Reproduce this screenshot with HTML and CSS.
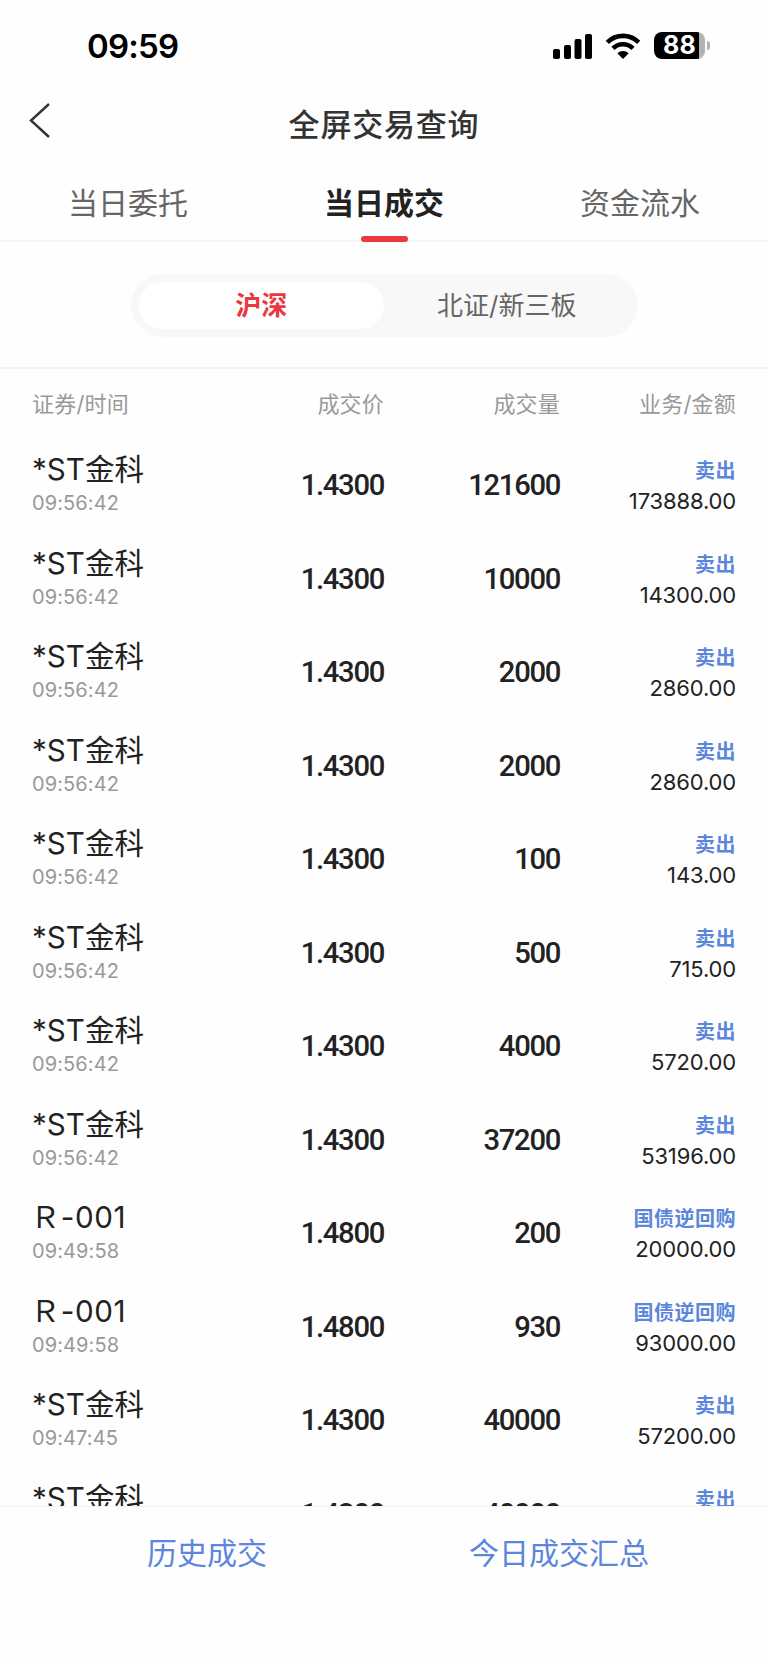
FILE: index.html
```html
<!DOCTYPE html>
<html lang="zh-CN">

<head>
  <meta charset="UTF-8">
  <meta name="viewport" content="width=device-width, initial-scale=1.0">
  <title>全屏交易查询</title>
  <link rel="stylesheet" href="styles.css">
</head>

<body>
  <div class="app">
    <!-- Status bar -->
    <div class="status-bar">
      <span class="clock">09:59</span>
      <div class="status-icons">
        <svg class="signal" width="40" height="26" viewBox="0 0 40 26">
          <rect x="0" y="16" width="7" height="10" rx="2" />
          <rect x="11" y="12" width="7" height="14" rx="2" />
          <rect x="21.5" y="6" width="7" height="20" rx="2" />
          <rect x="32" y="1" width="7" height="25" rx="2" />
        </svg>
        <svg class="wifi" width="36" height="26" viewBox="0 0 36 26">
          <path d="M2.3 9.3a22.5 22.5 0 0 1 31.4 0" />
          <path d="M8 15.4a14.3 14.3 0 0 1 20 0" />
          <path class="dot" d="M12.3 20.3a8.2 8.2 0 0 1 11.4 0L18 26z" />
        </svg>
        <div class="battery"><span class="battery-level">88</span></div>
        <div class="battery-cap"></div>
      </div>
    </div>

    <!-- Title -->
    <header class="navbar">
      <svg class="back" width="22" height="36" viewBox="0 0 22 36">
        <path d="M20 2L2 18.5L20 35" />
      </svg>
      <h1>全屏交易查询</h1>
    </header>

    <nav class="tabs">
      <a class="tab">当日委托</a>
      <a class="tab active">当日成交</a>
      <a class="tab">资金流水</a>
    </nav>

    <div class="market">
      <div class="segment">
        <span class="segment-item active">沪深</span>
        <span class="segment-item">北证/新三板</span>
      </div>
    </div>

    <!-- Deals -->
    <main class="deals">
      <div class="deals-head">
        <span>证券/时间</span>
        <span>成交价</span>
        <span>成交量</span>
        <span>业务/金额</span>
      </div>
      <div class="row">
        <div class="stock"><b>*ST金科</b><small>09:56:42</small></div>
        <div class="num">1.4300</div>
        <div class="num">121600</div>
        <div class="amount"><b>卖出</b><span>173888.00</span></div>
      </div>
      <div class="row">
        <div class="stock"><b>*ST金科</b><small>09:56:42</small></div>
        <div class="num">1.4300</div>
        <div class="num">10000</div>
        <div class="amount"><b>卖出</b><span>14300.00</span></div>
      </div>
      <div class="row">
        <div class="stock"><b>*ST金科</b><small>09:56:42</small></div>
        <div class="num">1.4300</div>
        <div class="num">2000</div>
        <div class="amount"><b>卖出</b><span>2860.00</span></div>
      </div>
      <div class="row">
        <div class="stock"><b>*ST金科</b><small>09:56:42</small></div>
        <div class="num">1.4300</div>
        <div class="num">2000</div>
        <div class="amount"><b>卖出</b><span>2860.00</span></div>
      </div>
      <div class="row">
        <div class="stock"><b>*ST金科</b><small>09:56:42</small></div>
        <div class="num">1.4300</div>
        <div class="num">100</div>
        <div class="amount"><b>卖出</b><span>143.00</span></div>
      </div>
      <div class="row">
        <div class="stock"><b>*ST金科</b><small>09:56:42</small></div>
        <div class="num">1.4300</div>
        <div class="num">500</div>
        <div class="amount"><b>卖出</b><span>715.00</span></div>
      </div>
      <div class="row">
        <div class="stock"><b>*ST金科</b><small>09:56:42</small></div>
        <div class="num">1.4300</div>
        <div class="num">4000</div>
        <div class="amount"><b>卖出</b><span>5720.00</span></div>
      </div>
      <div class="row">
        <div class="stock"><b>*ST金科</b><small>09:56:42</small></div>
        <div class="num">1.4300</div>
        <div class="num">37200</div>
        <div class="amount"><b>卖出</b><span>53196.00</span></div>
      </div>
      <div class="row">
        <div class="stock"><b class="repo">Ｒ-001</b><small>09:49:58</small></div>
        <div class="num">1.4800</div>
        <div class="num">200</div>
        <div class="amount"><b>国债逆回购</b><span>20000.00</span></div>
      </div>
      <div class="row">
        <div class="stock"><b class="repo">Ｒ-001</b><small>09:49:58</small></div>
        <div class="num">1.4800</div>
        <div class="num">930</div>
        <div class="amount"><b>国债逆回购</b><span>93000.00</span></div>
      </div>
      <div class="row">
        <div class="stock"><b>*ST金科</b><small>09:47:45</small></div>
        <div class="num">1.4300</div>
        <div class="num">40000</div>
        <div class="amount"><b>卖出</b><span>57200.00</span></div>
      </div>
      <div class="row">
        <div class="stock"><b>*ST金科</b></div>
        <div class="num">1.4300</div>
        <div class="num">40000</div>
        <div class="amount"><b>卖出</b></div>
      </div>
    </main>

    <footer class="bottom-bar">
      <a>历史成交</a>
      <a>今日成交汇总</a>
    </footer>
  </div>
</body>

</html>
```
FILE: styles.css
```css
* {
  box-sizing: border-box;
}

body {
  margin: 0;
  font-family: Inter, "Noto Sans CJK SC", sans-serif;
  color: #222;
  background: #fefefe;
}

.app {
  display: flex;
  flex-direction: column;
  width: 768px;
  height: 1662px;
  overflow: hidden;
}

/* Status bar */
.status-bar {
  display: flex;
  justify-content: space-between;
  flex: none;
  height: 90px;
  padding: 0 58px 0 87px;
  color: #000;
}

.clock {
  font-size: 33px;
  font-weight: 600;
  line-height: 92px;
  letter-spacing: -0.8px;
}

.status-icons {
  display: flex;
  align-items: center;
  height: 91px;
}

.wifi {
  margin: 0 13px 0 12px;
  fill: none;
  stroke: #000;
  stroke-width: 4.6;
}

.wifi .dot {
  fill: #000;
  stroke: none;
}

.battery {
  width: 51px;
  height: 27px;
  border-radius: 8px;
  background: linear-gradient(to right, #000 45px, #b3b3b3 45px);
}

.battery-level {
  display: block;
  width: 51px;
  color: #fff;
  font-size: 25px;
  font-weight: 700;
  line-height: 27px;
  letter-spacing: 0.3px;
  text-align: center;
}

.battery-cap {
  width: 3px;
  height: 9px;
  margin-left: 2px;
  border-radius: 0 4px 4px 0;
  background: #b3b3b3;
}

/* Title */
.navbar {
  display: grid;
  grid-template-columns: 100px 1fr 100px;
  flex: none;
  height: 68px;
}

.back {
  margin: 12px 0 0 29px;
  fill: none;
  stroke: #333;
  stroke-width: 2.4;
}

h1 {
  margin: 0;
  color: #333;
  font-size: 31px;
  font-weight: 500;
  line-height: 69px;
  letter-spacing: 0.8px;
  text-align: center;
}

.tabs {
  display: grid;
  grid-template-columns: repeat(3, 1fr);
  flex: none;
  height: 84px;
  border-bottom: 2px solid #f5f5f5;
}

.tab {
  color: #666;
  font-size: 30px;
  line-height: 90px;
  text-align: center;
}

.tab.active {
  color: #222;
  font-weight: 700;
}

.tab.active::after {
  content: "";
  display: block;
  width: 47px;
  height: 6px;
  margin: -12px auto 0;
  border-radius: 3px;
  background: #eb383f;
}

/* Market switch */
.market {
  flex: none;
  height: 127px;
  padding-top: 32px;
  border-bottom: 2px solid #f5f5f5;
}

.segment {
  display: flex;
  width: 507px;
  height: 63px;
  margin: 0 auto;
  padding: 8px;
  border-radius: 32px;
  background: #f8f8f8;
}

.segment-item {
  flex: 1;
  border-radius: 24px;
  color: #666;
  font-size: 26px;
  line-height: 47px;
  text-align: center;
}

.segment-item.active {
  background: #fff;
  color: #eb383f;
  font-weight: 700;
}

/* Deals */
.deals {
  flex: none;
  height: 1137px;
  overflow: hidden;
}

.deals-head,
.row {
  display: grid;
  grid-template-columns: 210px 142px 176px 176px;
  padding: 0 32px;
}

.deals-head {
  height: 69px;
  color: #999;
  font-size: 22px;
  line-height: 70px;
  letter-spacing: 0.2px;
  text-align: right;
}

.deals-head span:first-child {
  text-align: left;
}

.row {
  height: 93.56px;
}

.stock,
.amount {
  display: flex;
  flex-direction: column;
}

.stock b {
  height: 50px;
  font-size: 29.6px;
  font-weight: 400;
  line-height: 63px;
}

.stock .repo {
  letter-spacing: 0.6px;
  text-indent: -1.5px;
}

.stock small {
  color: #999;
  font-size: 20px;
  line-height: 30px;
  letter-spacing: 0.1px;
}

.num {
  font-family: Roboto, sans-serif;
  font-size: 29.2px;
  font-weight: 500;
  line-height: 94px;
  letter-spacing: -1.3px;
  text-align: right;
}

.amount {
  align-items: flex-end;
}

.amount b {
  height: 48px;
  color: #5b86dc;
  font-size: 20px;
  font-weight: 700;
  line-height: 66px;
  letter-spacing: 0.5px;
}

.amount span {
  font-size: 22px;
  line-height: 30px;
  letter-spacing: -0.15px;
}

.bottom-bar {
  display: flex;
  flex: 1;
  justify-content: space-between;
  padding: 0 119px 0 147px;
  border-top: 1px solid #f2f2f2;
  color: #5b86dc;
  font-size: 30px;
  line-height: 92px;
}
```
